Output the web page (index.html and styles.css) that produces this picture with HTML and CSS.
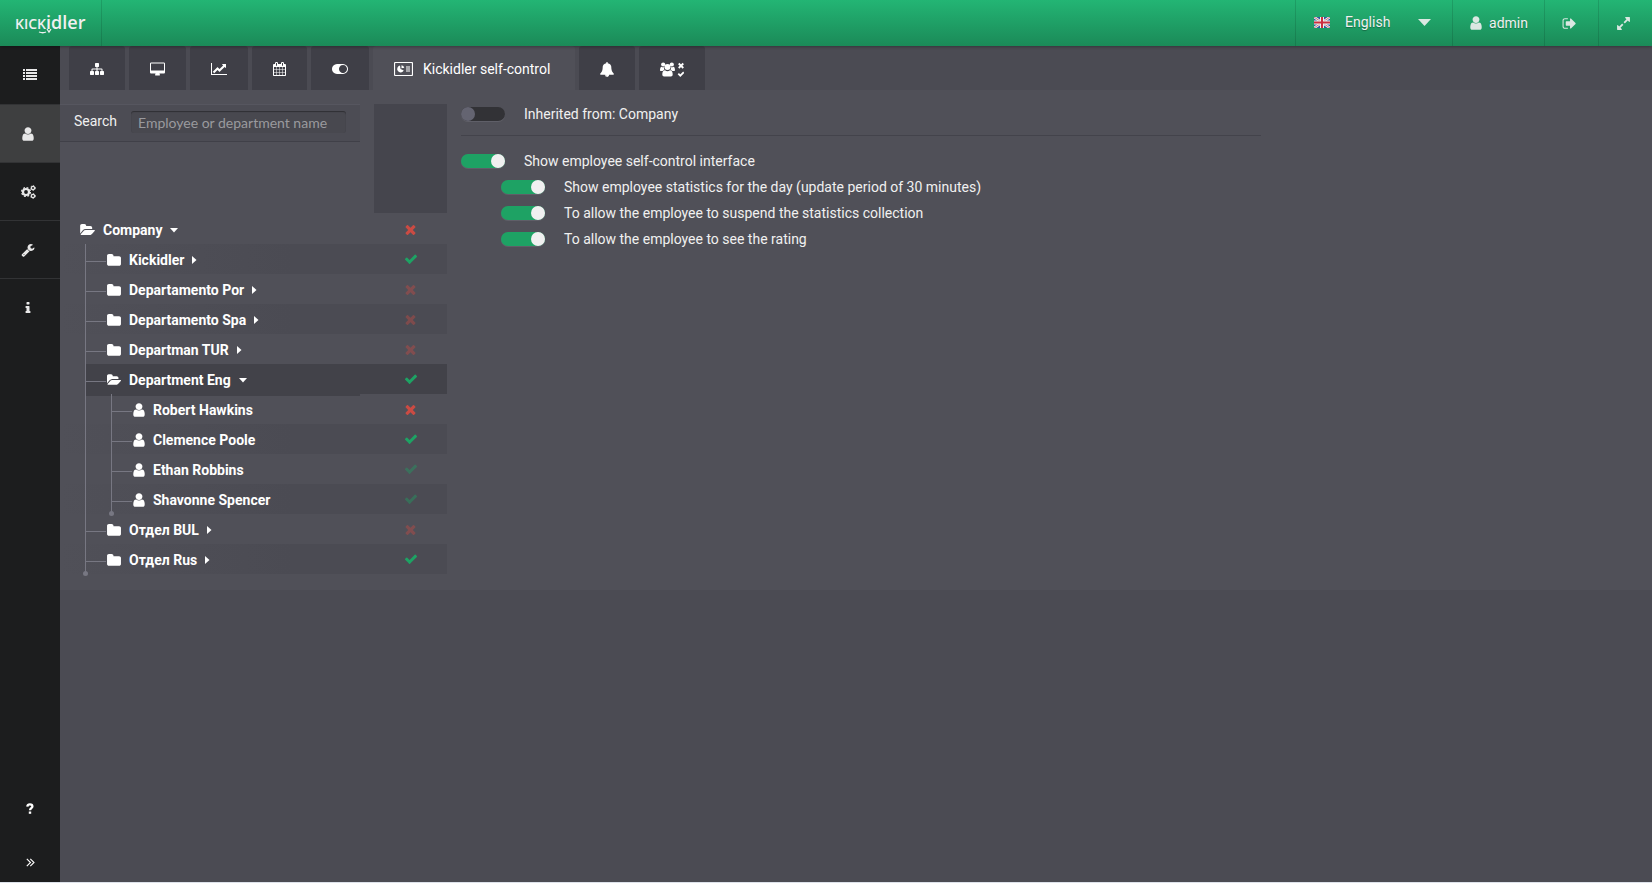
FILE: index.html
```html
<!DOCTYPE html>
<html lang="en">
<head>
    <meta charset="UTF-8">
    <meta name="viewport" content="width=device-width, initial-scale=1.0">
    <title>Kickidler self-control</title>
    <link rel="stylesheet" href="styles.css">
</head>
<body>
    <!-- icon set -->
    <svg class="sprite" aria-hidden="true">
        <symbol id="user" viewBox="256 0 1280 1792"><path d="M1536 1399q0 109-62.5 187t-150.5 78h-854q-88 0-150.5-78t-62.5-187q0-85 8.5-160.5t31.5-152 58.5-131 94-89 134.5-34.5q131 128 313 128t313-128q76 0 134.5 34.5t94 89 58.5 131 31.5 152 8.5 160.5zm-256-887q0 159-112.5 271.5t-271.5 112.5-271.5-112.5-112.5-271.5 112.5-271.5 271.5-112.5 271.5 112.5 112.5 271.5z"/></symbol>
        <symbol id="folder" viewBox="64 0 1664 1792"><path d="M1728 608v704q0 92-66 158t-158 66h-1216q-92 0-158-66t-66-158v-960q0-92 66-158t158-66h320q92 0 158 66t66 158v32h672q92 0 158 66t66 158z"/></symbol>
        <symbol id="folder-open" viewBox="0 0 1880 1792"><path d="M1879 952q0 31-31 66l-336 396q-43 51-120.5 86.5t-143.5 35.5h-1088q-34 0-60.5-13t-26.5-43q0-31 31-66l336-396q43-51 120.5-86.5t143.5-35.5h1088q34 0 60.5 13t26.5 43zm-343-344v160h-832q-94 0-197 47.5t-164 119.5l-337 396-5 6q0-4-.5-12.5t-.5-12.5v-960q0-92 66-158t158-66h320q92 0 158 66t66 158v32h544q92 0 158 66t66 158z"/></symbol>
        <symbol id="check" viewBox="0 0 1792 1792"><path d="M1671 566q0 40-28 68l-724 724-136 136q-28 28-68 28t-68-28l-136-136-362-362q-28-28-28-68t28-68l136-136q28-28 68-28t68 28l294 295 656-657q28-28 68-28t68 28l136 136q28 28 28 68z"/></symbol>
        <symbol id="times" viewBox="0 0 1792 1792"><path d="M1490 1322q0 40-28 68l-136 136q-28 28-68 28t-68-28l-294-294-294 294q-28 28-68 28t-68-28l-136-136q-28-28-28-68t28-68l294-294-294-294q-28-28-28-68t28-68l136-136q28-28 68-28t68 28l294 294 294-294q28-28 68-28t68 28l136 136q28 28 28 68t-28 68l-294 294 294 294q28 28 28 68z"/></symbol>
        <symbol id="list" viewBox="0 0 14 12"><path d="M0 0h2v2H0zM3 0h11v2H3zM0 3h2v2H0zM3 3h11v2H3zM0 6h2v2H0zM3 6h11v2H3zM0 9h2v2H0zM3 9h11v2H3z"/></symbol>
        <symbol id="cogs" viewBox="0 0 15 14">
            <g fill="none" stroke="currentColor">
                <circle cx="5" cy="7" r="3" stroke-width="2.2"/>
                <circle cx="5" cy="7" r="4.4" stroke-width="1.3" stroke-dasharray="1.9 1.556"/>
                <circle cx="12" cy="3" r="1.6" stroke-width="1.2"/>
                <circle cx="12" cy="3" r="2.4" stroke-width="0.9" stroke-dasharray="1.3 1.213"/>
                <circle cx="12" cy="11" r="1.6" stroke-width="1.2"/>
                <circle cx="12" cy="11" r="2.4" stroke-width="0.9" stroke-dasharray="1.3 1.213"/>
            </g>
        </symbol>
        <symbol id="wrench" viewBox="0 0 1792 1792"><path d="M448 1472q0-26-19-45t-45-19-45 19-19 45 19 45 45 19 45-19 19-45zm644-420l-682 682q-37 37-90 37-52 0-91-37l-106-108q-38-36-38-90 0-53 38-91l681-681q39 98 114.5 173.5t173.5 114.5zm634-435q0 39-23 106-47 134-164.5 217.5t-258.5 83.5q-185 0-316.5-131.5t-131.5-316.5 131.5-316.5 316.5-131.5q58 0 121.5 16.5t107.5 46.5q16 11 16 28t-16 28l-293 169v224l193 107q5-3 79-48.5t135.5-81 70.5-35.5q15 0 23.5 10t8.5 25z"/></symbol>
        <symbol id="info" viewBox="0 0 1792 1792"><path d="M1216 1344v128q0 26-19 45t-45 19h-512q-26 0-45-19t-19-45v-128q0-26 19-45t45-19h64v-384h-64q-26 0-45-19t-19-45v-128q0-26 19-45t45-19h384q26 0 45 19t19 45v576h64q26 0 45 19t19 45zm-128-1152v192q0 26-19 45t-45 19h-256q-26 0-45-19t-19-45v-192q0-26 19-45t45-19h256q26 0 45 19t19 45z"/></symbol>
        <symbol id="help" viewBox="0 0 8 11"><path d="M1.3 3.6C1.5 2 2.6 1.4 3.9 1.4c1.5 0 2.5.8 2.5 2 0 1.8-2.4 1.7-2.4 3.9" fill="none" stroke="currentColor" stroke-width="2.3"/><path d="M2.8 8.5h2.4v2.3H2.8z"/></symbol>
        <symbol id="angles" viewBox="0 0 9 9"><path d="M.8.8l3.7 3.7L.8 8.2M4.3.8L8 4.5 4.3 8.2" fill="none" stroke="currentColor" stroke-width="1.1"/></symbol>
        <symbol id="sitemap" viewBox="0 0 1792 1792"><path d="M1792 1248v320q0 40-28 68t-68 28h-320q-40 0-68-28t-28-68v-320q0-40 28-68t68-28h96v-192h-512v192h96q40 0 68 28t28 68v320q0 40-28 68t-68 28h-320q-40 0-68-28t-28-68v-320q0-40 28-68t68-28h96v-192h-512v192h96q40 0 68 28t28 68v320q0 40-28 68t-68 28h-320q-40 0-68-28t-28-68v-320q0-40 28-68t68-28h96v-192q0-52 38-90t90-38h512v-192h-96q-40 0-68-28t-28-68v-320q0-40 28-68t68-28h320q40 0 68 28t28 68v320q0 40-28 68t-68 28h-96v192h512q52 0 90 38t38 90v192h96q40 0 68 28t28 68z"/></symbol>
        <symbol id="desktop" viewBox="-64 -64 1920 1792"><path d="M1728 992v-832q0-13-9.5-22.5t-22.5-9.5h-1600q-13 0-22.5 9.5t-9.5 22.5v832q0 13 9.5 22.5t22.5 9.5h1600q13 0 22.5-9.5t9.5-22.5zm128-832v1088q0 66-47 113t-113 47h-544q0 37 16 77.5t32 71 16 43.5q0 26-19 45t-45 19h-512q-26 0-45-19t-19-45q0-14 16-44t32-70 16-78h-544q-66 0-113-47t-47-113v-1088q0-66 47-113t113-47h1600q66 0 113 47t47 113z"/></symbol>
        <symbol id="chart" viewBox="0 0 2048 1792"><path d="M2048 1536v128h-2048v-1536h128v1408h1920zm-128-1248v435q0 21-19.5 29.5t-35.5-7.5l-121-121-633 633q-10 10-23 10t-23-10l-233-233-416 416-192-192 585-585q10-10 23-10t23 10l233 233 464-464-121-121q-16-16-7.5-35.5t29.5-19.5h435q14 0 23 9t9 23z"/></symbol>
        <symbol id="calendar" viewBox="64 0 1664 1792"><path d="M192 1664h288v-288h-288v288zm352 0h320v-288h-320v288zm-352-352h288v-320h-288v320zm352 0h320v-320h-320v320zm-352-384h288v-288h-288v288zm736 736h320v-288h-320v288zm-384-736h320v-288h-320v288zm768 736h288v-288h-288v288zm-384-352h320v-320h-320v320zm-352-864v-288q0-13-9.5-22.5t-22.5-9.5h-64q-13 0-22.5 9.5t-9.5 22.5v288q0 13 9.5 22.5t22.5 9.5h64q13 0 22.5-9.5t9.5-22.5zm736 864h288v-320h-288v320zm-384-384h320v-288h-320v288zm384 0h288v-288h-288v288zm32-480v-288q0-13-9.5-22.5t-22.5-9.5h-64q-13 0-22.5 9.5t-9.5 22.5v288q0 13 9.5 22.5t22.5 9.5h64q13 0 22.5-9.5t9.5-22.5zm384-64v1280q0 52-38 90t-90 38h-1408q-52 0-90-38t-38-90v-1280q0-52 38-90t90-38h128v-96q0-66 47-113t113-47h64q66 0 113 47t47 113v96h384v-96q0-66 47-113t113-47h64q66 0 113 47t47 113v96h128q52 0 90 38t38 90z"/></symbol>
        <symbol id="toggle" viewBox="0 0 2048 1792"><path d="M0 896q0-130 51-248.5t136.5-204 204-136.5 248.5-51h768q130 0 248.5 51t204 136.5 136.5 204 51 248.5-51 248.5-136.5 204-204 136.5-248.5 51h-768q-130 0-248.5-51t-204-136.5-136.5-204-51-248.5zm1408 512q104 0 198.5-40.5t163.5-109.5 109.5-163.5 40.5-198.5-40.5-198.5-109.5-163.5-163.5-109.5-198.5-40.5-198.5 40.5-163.5 109.5-109.5 163.5-40.5 198.5 40.5 198.5 109.5 163.5 163.5 109.5 198.5 40.5z"/></symbol>
        <symbol id="card" viewBox="0 0 19 14">
            <rect x="0.5" y="0.5" width="18" height="13" rx="1" fill="none" stroke="currentColor" stroke-width="1.2"/>
            <path d="M6 3.5A3.5 3.5 0 1 0 9.8 8.5L6.5 7z"/>
            <path d="M7.5 3.2a3.5 3.5 0 0 1 2.8 2.6L7.5 6.2z"/>
            <rect x="12" y="4" width="4" height="6" opacity="0.5"/>
        </symbol>
        <symbol id="bell" viewBox="64 0 1664 1792"><path d="M912 1696q0-16-16-16-59 0-101.5-42.5t-42.5-101.5q0-16-16-16t-16 16q0 73 51.5 124.5t124.5 51.5q16 0 16-16zm816-288q0 52-38 90t-90 38h-448q0 106-75 181t-181 75-181-75-75-181h-448q-52 0-90-38t-38-90q50-42 91-88t85-119.5 74.5-158.5 50-206 19.5-260q0-152 117-282.5t307-158.5q-8-19-8-39 0-40 28-68t68-28 68 28 28 68q0 20-8 39 190 28 307 158.5t117 282.5q0 139 19.5 260t50 206 74.5 158.5 85 119.5 91 88z"/></symbol>
        <symbol id="group" viewBox="0 0 24 15">
            <circle cx="3.2" cy="2.5" r="2.1"/><circle cx="11.8" cy="2.5" r="2.1"/>
            <path d="M0 8.5C0 6 .6 4.7 1.6 4.7c1 .8 2.2.8 3 .1C3.7 6 3.9 7 4.5 7.900c-.8.1-1.4.5-1.8 1H1Q0 9 0 8.500zM15 8.500c0-2.500-.6-3.800-1.600-3.800-1 .8-2.200.8-3 .1.900 1.200.7 2.200.1 3.100.8.1 1.400.5 1.800 1H14q1 0 1-.4z"/>
            <circle cx="7.5" cy="5" r="3"/>
            <path d="M2.3 12.6c0-2.6.8-4.300 2.700-4.300 1.500 1.200 3.500 1.200 5 0 1.900 0 2.700 1.700 2.700 4.300 0 1.200-.7 2-1.800 2H4.100c-1.100 0-1.800-.8-1.800-2z"/>
            <path d="M18.700 1.500l4.600 4.500M23.300 1.500L18.700 6M18.300 11.700l2 2 3.500-3.500" fill="none" stroke="currentColor" stroke-width="1.8"/>
        </symbol>
        <symbol id="sign-out" viewBox="0 0 1792 1792"><path d="M704 1440q0 4 1 20t.5 26.5-3 23.5-10 19.5-20.5 6.5h-320q-119 0-203.5-84.5t-84.5-203.5v-704q0-119 84.5-203.5t203.5-84.5h320q13 0 22.5 9.5t9.5 22.5q0 4 1 20t.5 26.5-3 23.5-10 19.5-20.5 6.5h-320q-66 0-113 47t-47 113v704q0 66 47 113t113 47h312l11.5 1 11.5 3 8 5.5 7 9 2 13.5zm928-544q0 26-19 45l-544 544q-19 19-45 19t-45-19-19-45v-288h-448q-26 0-45-19t-19-45v-384q0-26 19-45t45-19h448v-288q0-26 19-45t45-19 45 19l544 544q19 19 19 45z"/></symbol>
        <symbol id="expand" viewBox="0 0 1792 1792"><path d="M883 1056q0 13-10 23l-332 332 144 144q19 19 19 45t-19 45-45 19h-448q-26 0-45-19t-19-45v-448q0-26 19-45t45-19 45 19l144 144 332-332q10-10 23-10t23 10l114 114q10 10 10 23zm781-864v448q0 26-19 45t-45 19-45-19l-144-144-332 332q-10 10-23 10t-23-10l-114-114q-10-10-10-23t10-23l332-332-144-144q-19-19-19-45t19-45 45-19h448q26 0 45 19t19 45z"/></symbol>
        <symbol id="caret-down" viewBox="0 0 8 8"><path d="M0 2h8L4 6.5z"/></symbol>
        <symbol id="caret-right" viewBox="0 0 5 8"><path d="M0 0l4.5 4L0 8z"/></symbol>
    </svg>

    <header class="header">
        <a class="logo" href="#" aria-label="Kickidler">
            <span class="logo-caps">KIC</span><span class="logo-caps logo-drop">K</span><span class="logo-main">idler</span>
            <svg class="logo-smile" width="14" height="6" viewBox="0 0 14 6"><path d="M1 4q4 1.5 7 0M9 1l2 3 2-3" fill="none" stroke="currentColor" stroke-width="1.3"/></svg>
        </a>
        <div class="header-right">
            <div class="language">
                <svg width="16" height="11" viewBox="0 0 16 11">
                    <rect width="16" height="11" fill="#3b4ba8"/>
                    <path d="M0 0l16 11M16 0L0 11" stroke="#fff" stroke-width="2.5"/>
                    <path d="M0 0l16 11M16 0L0 11" stroke="#d8405a" stroke-width="0.8"/>
                    <path d="M8 0v11M0 5.5h16" stroke="#fff" stroke-width="4"/>
                    <path d="M8 0v11M0 5.5h16" stroke="#e0223c" stroke-width="2"/>
                </svg>
                <select class="language-select" aria-label="Language">
                    <option>English</option>
                </select>
                <svg class="language-caret" width="13" height="7" viewBox="0 0 13 7"><path d="M0 0h13L6.5 7z"/></svg>
            </div>
            <a class="account" href="#"><svg width="12" height="16"><use href="#user"/></svg>admin</a>
            <button class="header-button" aria-label="Sign out"><svg width="15" height="15"><use href="#sign-out"/></svg></button>
            <button class="header-button" aria-label="Full screen"><svg width="15" height="15"><use href="#expand"/></svg></button>
        </div>
    </header>

    <div class="page">
        <nav class="sidebar">
            <a class="side-link first" href="#" aria-label="Reports"><svg width="14" height="12"><use href="#list"/></svg></a>
            <a class="side-link active" href="#" aria-label="Employees"><svg width="12" height="16"><use href="#user"/></svg></a>
            <a class="side-link" href="#" aria-label="Settings"><svg width="15" height="14"><use href="#cogs"/></svg></a>
            <a class="side-link" href="#" aria-label="Tools"><svg width="14" height="14"><use href="#wrench"/></svg></a>
            <a class="side-link" href="#" aria-label="Information"><svg width="14" height="14"><use href="#info"/></svg></a>
            <div class="side-bottom">
                <a class="side-small" href="#" aria-label="Help"><svg width="8" height="11"><use href="#help"/></svg></a>
                <button class="side-small" aria-label="Expand menu"><svg width="9" height="9"><use href="#angles"/></svg></button>
            </div>
        </nav>

        <main class="main">
            <div class="tabs">
                <button class="tab" aria-label="Structure"><svg width="14" height="14"><use href="#sitemap"/></svg></button>
                <button class="tab" aria-label="Monitoring"><svg width="15" height="14"><use href="#desktop"/></svg></button>
                <button class="tab" aria-label="Productivity"><svg width="16" height="14"><use href="#chart"/></svg></button>
                <button class="tab" aria-label="Schedule"><svg width="13" height="14"><use href="#calendar"/></svg></button>
                <button class="tab" aria-label="Recording"><svg width="16" height="14"><use href="#toggle"/></svg></button>
                <button class="tab active"><svg width="19" height="14"><use href="#card"/></svg>Kickidler self-control</button>
                <button class="tab" aria-label="Notifications"><svg width="14" height="15"><use href="#bell"/></svg></button>
                <button class="tab" aria-label="Access rights"><svg width="24" height="15"><use href="#group"/></svg></button>
            </div>

            <div class="content">
                <section class="employees">
                    <div class="employees-head">
                        <div class="search">
                            <label for="search">Search</label>
                            <input id="search" type="text" placeholder="Employee or department name">
                        </div>
                        <div class="column-head"></div>
                    </div>

                    <table class="tree">
                        <tr>
                            <td class="root"><div class="node"><svg width="15" height="14"><use href="#folder-open"/></svg><span>Company</span><svg width="8" height="8"><use href="#caret-down"/></svg></div></td>
                            <td class="status no"><svg width="15" height="15"><use href="#times"/></svg></td>
                        </tr>
                        <tr>
                            <td><div class="node"><i class="guide branch"></i><svg width="14" height="15"><use href="#folder"/></svg><span>Kickidler</span><svg width="5" height="8"><use href="#caret-right"/></svg></div></td>
                            <td class="status yes"><svg width="14" height="14"><use href="#check"/></svg></td>
                        </tr>
                        <tr>
                            <td><div class="node"><i class="guide branch"></i><svg width="14" height="15"><use href="#folder"/></svg><span>Departamento Por</span><svg width="5" height="8"><use href="#caret-right"/></svg></div></td>
                            <td class="status no inherited"><svg width="15" height="15"><use href="#times"/></svg></td>
                        </tr>
                        <tr>
                            <td><div class="node"><i class="guide branch"></i><svg width="14" height="15"><use href="#folder"/></svg><span>Departamento Spa</span><svg width="5" height="8"><use href="#caret-right"/></svg></div></td>
                            <td class="status no inherited"><svg width="15" height="15"><use href="#times"/></svg></td>
                        </tr>
                        <tr>
                            <td><div class="node"><i class="guide branch"></i><svg width="14" height="15"><use href="#folder"/></svg><span>Departman TUR</span><svg width="5" height="8"><use href="#caret-right"/></svg></div></td>
                            <td class="status no inherited"><svg width="15" height="15"><use href="#times"/></svg></td>
                        </tr>
                        <tr class="selected">
                            <td><div class="node"><i class="guide branch"></i><svg width="14" height="14"><use href="#folder-open"/></svg><span>Department Eng</span><svg width="8" height="8"><use href="#caret-down"/></svg></div></td>
                            <td class="status yes"><svg width="14" height="14"><use href="#check"/></svg></td>
                        </tr>
                        <tr>
                            <td><div class="node"><i class="guide"></i><i class="guide branch"></i><svg width="12" height="16"><use href="#user"/></svg><span>Robert Hawkins</span></div></td>
                            <td class="status no"><svg width="15" height="15"><use href="#times"/></svg></td>
                        </tr>
                        <tr>
                            <td><div class="node"><i class="guide"></i><i class="guide branch"></i><svg width="12" height="16"><use href="#user"/></svg><span>Clemence Poole</span></div></td>
                            <td class="status yes"><svg width="14" height="14"><use href="#check"/></svg></td>
                        </tr>
                        <tr>
                            <td><div class="node"><i class="guide"></i><i class="guide branch"></i><svg width="12" height="16"><use href="#user"/></svg><span>Ethan Robbins</span></div></td>
                            <td class="status yes inherited"><svg width="14" height="14"><use href="#check"/></svg></td>
                        </tr>
                        <tr>
                            <td><div class="node"><i class="guide"></i><i class="guide branch last"></i><svg width="12" height="16"><use href="#user"/></svg><span>Shavonne Spencer</span></div></td>
                            <td class="status yes inherited"><svg width="14" height="14"><use href="#check"/></svg></td>
                        </tr>
                        <tr>
                            <td><div class="node"><i class="guide branch"></i><svg width="14" height="15"><use href="#folder"/></svg><span>Отдел BUL</span><svg width="5" height="8"><use href="#caret-right"/></svg></div></td>
                            <td class="status no inherited"><svg width="15" height="15"><use href="#times"/></svg></td>
                        </tr>
                        <tr>
                            <td><div class="node"><i class="guide branch last"></i><svg width="14" height="15"><use href="#folder"/></svg><span>Отдел Rus</span><svg width="5" height="8"><use href="#caret-right"/></svg></div></td>
                            <td class="status yes"><svg width="14" height="14"><use href="#check"/></svg></td>
                        </tr>
                    </table>
                </section>

                <section class="settings">
                    <div class="inherit">
                        <label class="option"><input type="checkbox" class="switch">Inherited from: Company</label>
                    </div>
                    <label class="option"><input type="checkbox" class="switch" checked>Show employee self-control interface</label>
                    <div class="sub-options">
                        <label class="option"><input type="checkbox" class="switch" checked>Show employee statistics for the day (update period of 30 minutes)</label>
                        <label class="option"><input type="checkbox" class="switch" checked>To allow the employee to suspend the statistics collection</label>
                        <label class="option"><input type="checkbox" class="switch" checked>To allow the employee to see the rating</label>
                    </div>
                </section>
            </div>
        </main>
    </div>
</body>
</html>
```
FILE: styles.css
```css
* {
    margin: 0;
    padding: 0;
    box-sizing: border-box;
}

body {
    display: flex;
    flex-direction: column;
    min-height: 100vh;
    background-color: #4b4b53;
    border-bottom: 1px solid #dde2ea;
    color: #f0f0f0;
    font-family: Roboto, sans-serif;
    font-size: 14px;
    line-height: 20px;
}

button, select, input {
    font: inherit;
    color: inherit;
    background: none;
    border: none;
}

button {
    cursor: pointer;
}

a {
    color: inherit;
    text-decoration: none;
}

svg {
    fill: currentColor;
    flex-shrink: 0;
}

.sprite {
    position: absolute;
    width: 0;
    height: 0;
}

/* Header */
.header {
    display: flex;
    justify-content: space-between;
    height: 46px;
    background: linear-gradient(#23b574, #1b8a58);
    box-shadow: 0 1px 3px rgba(0, 0, 0, 0.3);
    text-shadow: 0 1px 1px rgba(0, 0, 0, 0.3);
    z-index: 1;
}

.logo {
    position: relative;
    display: flex;
    align-items: baseline;
    width: 102px;
    padding: 10px 0 0 15px;
    border-right: 1px solid rgba(0, 0, 0, 0.12);
    font-family: "Open Sans", "Noto Sans", sans-serif;
    font-weight: 600;
    line-height: 24px;
    text-shadow: none;
}

.logo-caps {
    font-size: 14px;
}

.logo-drop {
    padding-top: 2px;
}

.logo-main {
    font-size: 18px;
}

.logo-smile {
    position: absolute;
    left: 38px;
    top: 28px;
}

.header-right {
    display: flex;
}

.header-right > * {
    display: flex;
    align-items: center;
    border-left: 1px solid rgba(0, 0, 0, 0.12);
}

.header-right svg {
    opacity: 0.9;
}

.language {
    position: relative;
    width: 157px;
    padding: 0 21px 2px 18px;
}

.language-select {
    flex: 1;
    min-width: 0;
    height: 30px;
    padding-left: 15px;
    appearance: none;
    text-shadow: inherit;
}

.language-select option {
    color: #333;
}

.language-caret {
    pointer-events: none;
}

.account {
    gap: 7px;
    padding: 0 16px 0 17px;
}

.header-button {
    width: 54px;
    padding-left: 17px;
}

/* Sidebar */
.page {
    display: flex;
    flex: 1;
}

.sidebar {
    display: flex;
    flex-direction: column;
    width: 60px;
    background-color: #1c1d1e;
    color: #e8e8e8;
}

.side-link {
    display: flex;
    align-items: center;
    justify-content: center;
    height: 58px;
    padding-right: 4px;
    border-bottom: 1px solid #323335;
}

.side-link:nth-child(5) {
    border-bottom: none;
}

.side-link.first {
    height: 59px;
    padding-right: 0;
}

.side-link.active {
    background-color: #3e3f40;
}

.side-bottom {
    display: flex;
    flex-direction: column;
    margin-top: auto;
    color: #fff;
}

.side-small {
    display: flex;
    align-items: center;
    justify-content: center;
    height: 68px;
}

button.side-small {
    height: 40px;
}

/* Tabs */
.main {
    flex: 1;
    min-width: 0;
}

.tabs {
    display: flex;
    gap: 4px;
    height: 44px;
    padding-left: 9px;
}

.tab {
    display: flex;
    align-items: center;
    gap: 10px;
    padding: 2px 21px 0;
    border-radius: 3px 3px 0 0;
    background-color: #3f3f47;
    color: #fff;
}

.tab.active {
    padding-right: 25px;
    background-color: #505058;
}

.content {
    display: flex;
    gap: 14px;
    padding: 14px 0 16px;
    background-color: #505058;
}

/* Employees */
.employees {
    width: 387px;
    flex-shrink: 0;
}

.employees-head {
    display: flex;
    align-items: flex-start;
    gap: 14px;
    height: 110px;
}

.search {
    display: flex;
    align-items: center;
    gap: 14px;
    width: 300px;
    height: 38px;
    padding: 0 14px 2px;
    background-color: #4c4c54;
    border-top: 1px solid #56565f;
    border-bottom: 1px solid #404048;
}

.search label {
    padding-bottom: 2px;
}

.search input {
    flex: 1;
    min-width: 0;
    height: 22px;
    padding: 0 7px;
    background-color: #48484f;
    border-radius: 3px;
    box-shadow: inset 0 1px 1px rgba(0, 0, 0, 0.35);
    font-family: Lato, sans-serif;
}

.search input::placeholder {
    color: #9a9a9e;
}

.column-head {
    flex: 1;
    height: 109px;
    background-color: #45454d;
}

.tree {
    width: 100%;
    border-collapse: collapse;
    table-layout: fixed;
    color: #fff;
    font-weight: 700;
}

.tree td {
    height: 30px;
}

.tree tr:nth-child(even) {
    background: linear-gradient(90deg, transparent, #4b4b53 60%);
}

.tree tr.selected {
    background: linear-gradient(90deg, transparent 25px, #424249 25px);
}

.node {
    display: flex;
    align-items: center;
    gap: 8px;
    height: 30px;
    padding-left: 25px;
}

.node svg, .node span {
    margin-top: 2px;
}

.root .node {
    padding-left: 20px;
}

.selected .node {
    margin-left: 25px;
    padding-left: 0;
    box-shadow: 0 2px 0 #424249;
}

.guide {
    position: relative;
    align-self: stretch;
    width: 26px;
    margin-right: -8px;
    border-left: 1px solid #777782;
}

.guide.branch {
    width: 22px;
    background: linear-gradient(#777782, #777782) 0 17px / 20px 1px no-repeat;
}

.guide.last::after {
    content: "";
    position: absolute;
    left: -3px;
    bottom: -2px;
    width: 5px;
    height: 5px;
    border-radius: 50%;
    background-color: #777782;
}

.status {
    width: 87px;
    padding-left: 14px;
}

.status svg {
    display: block;
    margin: 0 auto;
}

.status.yes {
    color: #1ea264;
}

.status.no {
    color: #cb4b43;
}

.status.inherited svg {
    opacity: 0.4;
}

/* Settings */
.settings {
    width: 67%;
    max-width: 800px;
}

.inherit {
    height: 32px;
    margin-bottom: 12px;
    border-bottom: 1px solid #43434b;
}

.option {
    display: flex;
    align-items: center;
    gap: 19px;
    height: 26px;
}

.inherit .option {
    height: 20px;
}

.sub-options {
    padding-left: 40px;
}

.switch {
    display: flex;
    width: 44px;
    height: 14px;
    appearance: none;
    border-radius: 7px;
    background-color: #323236;
    box-shadow: 0 1px 0 #5f5f68;
}

.switch::before {
    content: "";
    width: 14px;
    height: 14px;
    border-radius: 50%;
    background-color: #646471;
}

.switch:checked {
    justify-content: flex-end;
    background-color: #1ea264;
}

.switch:checked::before {
    background-color: #f0f0f0;
}
```
